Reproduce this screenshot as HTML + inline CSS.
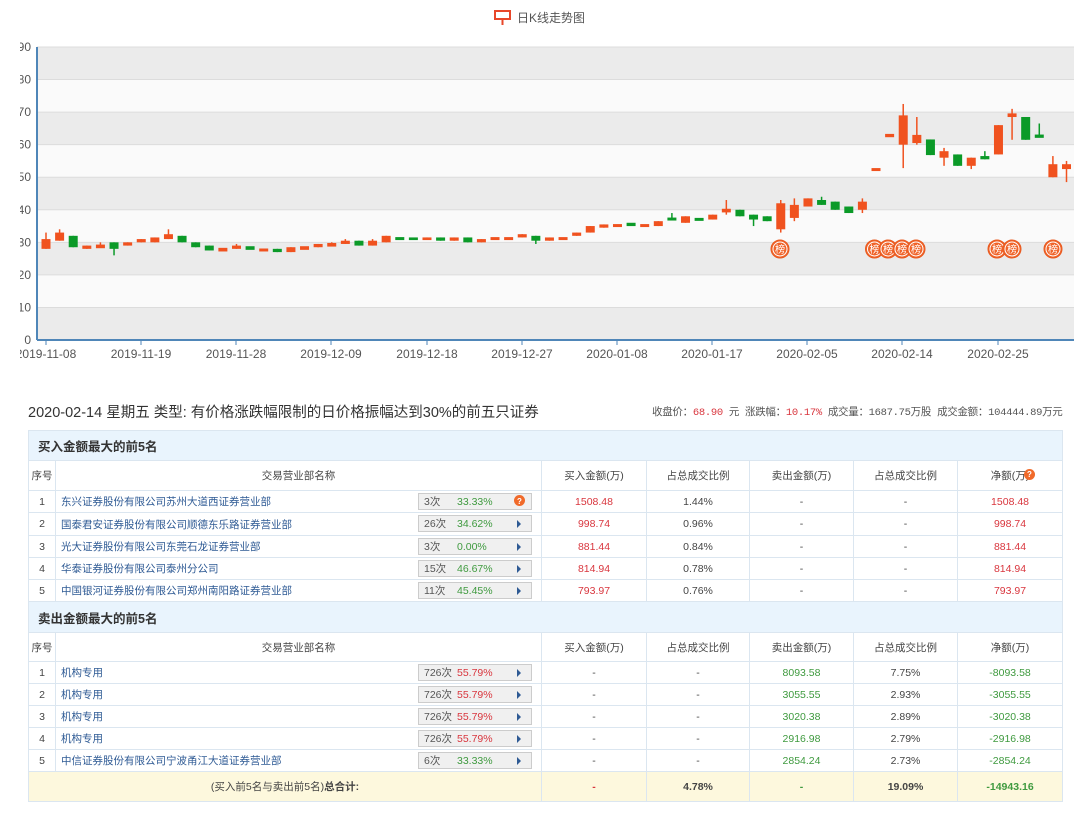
<!DOCTYPE html>
<html><head><meta charset="utf-8">
<style>
*{margin:0;padding:0;box-sizing:border-box}
body{width:1080px;height:815px;background:#fff;font-family:"Liberation Sans","Noto Sans CJK SC",sans-serif;color:#333;position:relative;overflow:hidden}
#chart{position:absolute;left:0;top:0}
.title{position:absolute;left:28px;top:401px;font-size:14.5px;color:#333;white-space:nowrap}
.info{position:absolute;left:652px;top:404px;font-size:10.5px;color:#555;white-space:nowrap;font-family:"Liberation Mono","Noto Sans CJK SC",monospace;letter-spacing:-0.3px}
.info b{font-weight:normal;color:#d9363e}
table{position:absolute;left:28px;border-collapse:collapse;table-layout:fixed;width:1034px;font-size:10.5px}
td{border:1px solid #dbe6f0;text-align:center;color:#444;padding:0;white-space:nowrap;overflow:hidden}
.sec td{background:#e9f4fd;text-align:left;padding-left:9px;font-weight:bold;font-size:12.5px;color:#333}
.nm{text-align:left;padding-left:5px;color:#2e5a94;position:relative}
.bd{position:absolute;left:362px;top:2px;width:114px;height:17px;background:#f0f0f0;border:1px solid #ccc;font-size:10.5px;color:#555;text-align:left}
.bd span{position:absolute;top:1px;line-height:14px}
.r{color:#d9363e}.g{color:#3f9a3f}
.tri{position:absolute;left:98px;top:4px;width:0;height:0;border-left:4px solid #2e5a94;border-top:4px solid transparent;border-bottom:4px solid transparent}
.q{position:absolute;left:95px;top:2px;width:11px;height:11px;border-radius:50%;background:#f06a2a;color:#fff;font-size:8px;line-height:11px;text-align:center;font-weight:bold}
.tot td{background:#fdf8dd;font-weight:bold}
</style></head><body>
<svg id="chart" width="1080" height="370" xmlns="http://www.w3.org/2000/svg"></svg>
<div class="title">2020-02-14 星期五 类型: 有价格涨跌幅限制的日价格振幅达到30%的前五只证券</div>
<div class="info">收盘价：<b>68.90</b> 元 涨跌幅：<b>10.17%</b> 成交量：1687.75万股 成交金额：104444.89万元</div>

<table style="top:430px">
<colgroup><col style="width:27px"><col style="width:486px"><col style="width:105px"><col style="width:103px"><col style="width:104px"><col style="width:104px"><col style="width:105px"></colgroup>
<tr class="sec" style="height:30px"><td colspan="7">买入金额最大的前5名</td></tr>
<tr style="height:30px"><td>序号</td><td>交易营业部名称</td><td>买入金额(万)</td><td>占总成交比例</td><td>卖出金额(万)</td><td>占总成交比例</td><td style="position:relative">净额(万)<span class="q" style="left:66px;top:8px">?</span></td></tr>
<tr style="height:22px"><td>1</td><td class="nm">东兴证券股份有限公司苏州大道西证券营业部<div class="bd"><span style="left:5px">3次</span><span class="g" style="left:38px">33.33%</span><span class="q">?</span></div></td><td class="r">1508.48</td><td>1.44%</td><td>-</td><td>-</td><td class="r">1508.48</td></tr>
<tr style="height:23px"><td>2</td><td class="nm">国泰君安证券股份有限公司顺德东乐路证券营业部<div class="bd"><span style="left:5px">26次</span><span class="g" style="left:38px">34.62%</span><i class="tri"></i></div></td><td class="r">998.74</td><td>0.96%</td><td>-</td><td>-</td><td class="r">998.74</td></tr>
<tr style="height:22px"><td>3</td><td class="nm">光大证券股份有限公司东莞石龙证券营业部<div class="bd"><span style="left:5px">3次</span><span class="g" style="left:38px">0.00%</span><i class="tri"></i></div></td><td class="r">881.44</td><td>0.84%</td><td>-</td><td>-</td><td class="r">881.44</td></tr>
<tr style="height:22px"><td>4</td><td class="nm">华泰证券股份有限公司泰州分公司<div class="bd"><span style="left:5px">15次</span><span class="g" style="left:38px">46.67%</span><i class="tri"></i></div></td><td class="r">814.94</td><td>0.78%</td><td>-</td><td>-</td><td class="r">814.94</td></tr>
<tr style="height:22px"><td>5</td><td class="nm">中国银河证券股份有限公司郑州南阳路证券营业部<div class="bd"><span style="left:5px">11次</span><span class="g" style="left:38px">45.45%</span><i class="tri"></i></div></td><td class="r">793.97</td><td>0.76%</td><td>-</td><td>-</td><td class="r">793.97</td></tr>
<tr class="sec" style="height:31px"><td colspan="7">卖出金额最大的前5名</td></tr>
<tr style="height:29px"><td>序号</td><td>交易营业部名称</td><td>买入金额(万)</td><td>占总成交比例</td><td>卖出金额(万)</td><td>占总成交比例</td><td>净额(万)</td></tr>
<tr style="height:22px"><td>1</td><td class="nm">机构专用<div class="bd"><span style="left:5px">726次</span><span class="r" style="left:38px">55.79%</span><i class="tri"></i></div></td><td>-</td><td>-</td><td class="g">8093.58</td><td>7.75%</td><td class="g">-8093.58</td></tr>
<tr style="height:22px"><td>2</td><td class="nm">机构专用<div class="bd"><span style="left:5px">726次</span><span class="r" style="left:38px">55.79%</span><i class="tri"></i></div></td><td>-</td><td>-</td><td class="g">3055.55</td><td>2.93%</td><td class="g">-3055.55</td></tr>
<tr style="height:22px"><td>3</td><td class="nm">机构专用<div class="bd"><span style="left:5px">726次</span><span class="r" style="left:38px">55.79%</span><i class="tri"></i></div></td><td>-</td><td>-</td><td class="g">3020.38</td><td>2.89%</td><td class="g">-3020.38</td></tr>
<tr style="height:22px"><td>4</td><td class="nm">机构专用<div class="bd"><span style="left:5px">726次</span><span class="r" style="left:38px">55.79%</span><i class="tri"></i></div></td><td>-</td><td>-</td><td class="g">2916.98</td><td>2.79%</td><td class="g">-2916.98</td></tr>
<tr style="height:22px"><td>5</td><td class="nm">中信证券股份有限公司宁波甬江大道证券营业部<div class="bd"><span style="left:5px">6次</span><span class="g" style="left:38px">33.33%</span><i class="tri"></i></div></td><td>-</td><td>-</td><td class="g">2854.24</td><td>2.73%</td><td class="g">-2854.24</td></tr>
<tr class="tot" style="height:30px"><td colspan="2" style="font-weight:normal">(买入前5名与卖出前5名)<b>总合计:</b></td><td class="r">-</td><td>4.78%</td><td class="g">-</td><td>19.09%</td><td class="g">-14943.16</td></tr>
</table>

<script>
(function(){
var s=document.getElementById('chart');var h='';
var L=37,R=1074,T=47,B=340;
function Y(p){return B-p*(B-T)/90;}
for(var i=0;i<9;i++){var y1=Y(90-i*10),y2=Y(80-i*10);h+='<rect x="'+L+'" y="'+y1+'" width="'+(R-L)+'" height="'+(y2-y1)+'" fill="'+(i%2==0?'#ebebeb':'#fafafa')+'"/>';h+='<line x1="'+L+'" x2="'+R+'" y1="'+y1+'" y2="'+y1+'" stroke="#dcdcdc"/>';}
for(var v=0;v<=90;v+=10){h+='<text x="31" y="'+(Y(v)+4)+'" font-size="12" fill="#555" text-anchor="end" font-family="Liberation Sans">'+v+'</text>';}
h+='<line x1="'+L+'" x2="'+L+'" y1="'+T+'" y2="'+B+'" stroke="#4f86b8" stroke-width="2"/>';
h+='<line x1="'+L+'" x2="'+R+'" y1="'+B+'" y2="'+B+'" stroke="#4f86b8" stroke-width="2"/>';
var ds=[['2019-11-08',46],['2019-11-19',141],['2019-11-28',236],['2019-12-09',331],['2019-12-18',427],['2019-12-27',522],['2020-01-08',617],['2020-01-17',712],['2020-02-05',807],['2020-02-14',902],['2020-02-25',998]];
ds.forEach(function(d){h+='<line x1="'+d[1]+'" x2="'+d[1]+'" y1="'+B+'" y2="'+(B+5)+'" stroke="#4f86b8"/>';h+='<text x="'+d[1]+'" y="358" font-size="12" fill="#555" text-anchor="middle" font-family="Liberation Sans">'+d[0]+'</text>';});
var c=[[28,31,33,28],[30.5,33,34,30.5],[32,28.5,32,28.5],[28,29,29,28],[28.5,29,30,28.5],[30,28,30,26],[29,30,30,29],[30,31,31,30],[30,31.5,31.5,30],[31,32.5,34,31],[32,30,32,30],[30,28.5,30,28.5],[29,27.5,29,27.5],[27.5,28,28,27.5],[28,29,29.5,28],[28.5,28,28.5,28],[27.5,27.8,27.8,27.5],[28,27,28,27],[27,28.5,28.5,27],[28,28.5,28.5,28],[28.5,29.5,29.5,28.5],[29,29.5,30,29],[29.5,30.5,31,29.5],[30.5,29,30.5,29],[29,30.5,31,29],[30,32,32,30],[31.3,31,31.3,31],[31.2,31,31.2,31],[31,31.2,31.5,31],[31.5,30.5,31.5,30.5],[30.5,31.5,31.5,30.5],[31.5,30,31.5,30],[30,31,31,30],[31,31.3,31.3,31],[31,31.3,31.3,31],[31.5,32.5,32.5,31.5],[32,30.5,32,29.5],[30.5,31.5,31.5,30.5],[31,31.3,31.3,31],[32,33,33,32],[33,35,35,33],[34.5,35.5,35.5,34.5],[35,35.3,35.5,34.8],[35.7,35.3,35.7,35.3],[35,35.3,35.3,35],[35,36.5,36.5,35],[37.3,37,39,37],[36,38,38,36],[37.2,36.9,37.2,36.9],[37,38.5,38.5,37],[39.5,40,43,38.5],[40,38,40,38],[38.5,37,38.5,35],[38,36.5,38,36.5],[34,42,43,33],[37.5,41.5,43.5,36.5],[41,43.5,43.5,41],[43,41.5,44,41.5],[42.5,40,42.5,40],[41,39,41,39],[40,42.5,43.5,39],[52.2,52.5,52.5,52.2],[62.6,63,63,62.6],[60,69,72.5,52.8],[60.5,63,68.5,60],[61.6,56.8,61.6,56.8],[56,58,59,53.5],[57,53.5,57,53.5],[53.5,56,56,52.5],[56.5,55.5,58,55.5],[57,66,66,57],[68.8,69.3,71,61.5],[68.5,61.5,68.5,61.5],[62.8,62.4,66.5,62.4],[50,54,56.5,50],[52.5,54,55,48.5]];
var st=(1066.5-46)/(c.length-1);
c.forEach(function(k,i){var x=46+i*st;var up=k[1]>=k[0];var col=up?'#f0521f':'#0b9a28';
h+='<line x1="'+x+'" x2="'+x+'" y1="'+Y(k[2])+'" y2="'+Y(k[3])+'" stroke="'+col+'" stroke-width="1.5"/>';
var t=Y(Math.max(k[0],k[1])),b=Y(Math.min(k[0],k[1]));if(b-t<2){t-=1;b+=1;}
h+='<rect x="'+(x-4.5)+'" y="'+t+'" width="9" height="'+(b-t)+'" fill="'+col+'"/>';});
[780,874.5,888,902,916,997,1012,1053].forEach(function(x){h+='<circle cx="'+x+'" cy="249" r="9" fill="#f0642a" stroke="#e85a20" stroke-width="1"/><circle cx="'+x+'" cy="249" r="7" fill="none" stroke="#fff" stroke-width="1"/><text x="'+x+'" y="253" font-size="10" fill="#fff" text-anchor="middle" font-family="Noto Sans CJK SC">榜</text>';});
h+='<rect x="0" y="30" width="20" height="340" fill="#fff"/>';
h+='<rect x="495" y="11" width="15" height="8" fill="none" stroke="#e8472a" stroke-width="2"/><line x1="502.5" x2="502.5" y1="19" y2="25" stroke="#e8472a" stroke-width="2"/>';
h+='<text x="517" y="22" font-size="12" fill="#555" font-family="Liberation Sans,Noto Sans CJK SC">日K线走势图</text>';
s.innerHTML=h;})();
</script>
</body></html>
